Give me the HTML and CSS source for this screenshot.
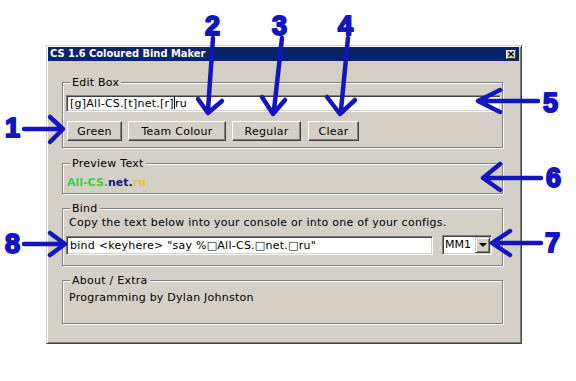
FILE: index.html
```html
<!DOCTYPE html>
<html lang="en">
<head>
  <meta charset="UTF-8">
  <title>CS 1.6 Coloured Bind Maker</title>
  <link rel="stylesheet" href="styles.css">
</head>
<body>
  <div class="window">
    <div class="titlebar">
      <span class="title">CS 1.6 Coloured Bind Maker</span>
      <span class="close">
        <svg width="6" height="6" viewBox="0 0 6 6"><path d="M0.5 0.5L5.5 5.5M5.5 0.5L0.5 5.5" stroke="#000" stroke-width="1.3"/></svg>
      </span>
    </div>
    <div class="client">
      <div class="group group-edit">
        <span class="group-title">Edit Box</span>
        <div class="textbox">[g]All-CS.[t]net.[r]<span class="caret"></span>ru</div>
        <div class="buttons">
          <button class="btn btn-green">Green</button>
          <button class="btn btn-team">Team Colour</button>
          <button class="btn btn-regular">Regular</button>
          <button class="btn btn-clear">Clear</button>
        </div>
      </div>

      <div class="group group-preview">
        <span class="group-title">Preview Text</span>
        <div class="preview"><span class="c-green">All-CS.</span><span class="c-team">net.</span><span class="c-regular">ru</span></div>
      </div>

      <div class="group group-bind">
        <span class="group-title">Bind</span>
        <div class="note">Copy the text below into your console or into one of your configs.</div>
        <div class="bind-row">
          <div class="textbox textbox-bind">bind &lt;keyhere&gt; "say %□All-CS.□net.□ru"</div>
          <div class="combo">
            <span class="combo-value">MM1</span>
            <span class="combo-btn"><span class="combo-arrow"></span></span>
          </div>
        </div>
      </div>

      <div class="group group-about">
        <span class="group-title">About / Extra</span>
        <div class="note">Programming by Dylan Johnston</div>
      </div>
    </div>
  </div>

  <!-- hand drawn callouts on top of the screenshot -->
  <svg class="marks" width="576" height="381" viewBox="0 0 576 381">
    <g class="arrow">
      <path d="M24 129L62 129M50 117L63 129L50 142"/>
      <path d="M213 38L208 110M198 99L208 113L222 101"/>
      <path d="M282 38L274 110M262 97L273 114L285 100"/>
      <path d="M348 38L341 110M327 97L340 114L355 100"/>
      <path d="M538 101L479 101M500 90L478 101L500 112"/>
      <path d="M541 178L484 178M500 164L483 178L500 190"/>
      <path d="M541 243L493 243M510 231L492 243L510 255"/>
      <path d="M24 244L64 244M50 233L65 244L50 255"/>
    </g>
    <g class="num">
      <text x="5" y="137">1</text>
      <text x="205" y="35">2</text>
      <text x="272" y="35">3</text>
      <text x="338" y="35">4</text>
      <text x="543" y="112">5</text>
      <text x="546" y="187">6</text>
      <text x="545" y="252">7</text>
      <text x="5" y="253">8</text>
    </g>
  </svg>
</body>
</html>
```
FILE: styles.css
```css
body {
  margin: 0;
  background: #fff;
  font: 11px "DejaVu Sans", sans-serif;
  letter-spacing: 0.25px;
  color: #000;
  position: relative;
  width: 576px;
  height: 381px;
  overflow: hidden;
}

/* window frame */
.window {
  margin: 45px 0 0 46px;
  width: 476px;
  height: 299px;
  box-sizing: border-box;
  background: #d4d0c8;
  border: 1px solid;
  border-color: #d4d0c8 #404040 #404040 #d4d0c8;
  box-shadow: inset 1px 1px 0 #fff, inset -1px -1px 0 #808080;
  padding: 1px 2px 0 1px;
}
.titlebar {
  height: 14px;
  background: #0a246a;
  display: flex;
  align-items: center;
  justify-content: space-between;
  padding: 0 3px 0 2px;
}
.title {
  color: #fff;
  font-family: "DejaVu Sans Condensed", "DejaVu Sans", sans-serif;
  font-weight: bold;
  letter-spacing: 0;
  line-height: 14px;
}
.close {
  width: 10px;
  height: 9px;
  box-sizing: border-box;
  background: #d4d0c8;
  border: 1px solid;
  border-color: #fff #404040 #404040 #fff;
  display: flex;
  align-items: center;
  justify-content: center;
}
.close svg { display: block; }

.client {
  padding: 0 0 0 14px;
}

/* group boxes */
.group {
  position: relative;
  width: 441px;
  box-sizing: border-box;
  border: 1px solid #808080;
  box-shadow: inset 1px 1px 0 #fff, 1px 1px 0 #fff;
  padding: 0 1px 0 3px;
}
.group-title {
  position: absolute;
  top: -7px;
  left: 7px;
  padding: 0 2px;
  line-height: 13px;
  background: #d4d0c8;
}
.group-edit { margin-top: 21px; padding-top: 12px; padding-bottom: 6px; }
.group-preview { margin-top: 15px; padding-top: 12px; padding-bottom: 4px; }
.group-bind { margin-top: 14px; padding-top: 7px; padding-bottom: 10px; }
.group-about { margin-top: 14px; padding-top: 10px; padding-bottom: 19px; }

/* sunken edit fields */
.textbox {
  height: 17px;
  box-sizing: border-box;
  background: #fff;
  border: 1px solid;
  border-color: #808080 #fff #fff #808080;
  box-shadow: inset 1px 1px 0 #404040, inset -1px -1px 0 #d4d0c8;
  padding: 0 3px;
  line-height: 15px;
  white-space: nowrap;
  overflow: hidden;
}
.caret {
  display: inline-block;
  width: 1px;
  height: 13px;
  background: #000;
  vertical-align: -2px;
}

.buttons {
  display: flex;
  margin: 9px 0 0 1px;
}
.btn {
  height: 20px;
  box-sizing: border-box;
  background: #d4d0c8;
  font: inherit;
  letter-spacing: inherit;
  color: #000;
  padding: 0;
  border: 1px solid;
  border-color: #fff #404040 #404040 #fff;
  box-shadow: inset -1px -1px 0 #808080;
  margin-right: 6px;
}
.btn-green { width: 55px; }
.btn-team { width: 98px; }
.btn-regular { width: 69px; margin-right: 7px; }
.btn-clear { width: 51px; }

.preview {
  font-weight: bold;
  letter-spacing: 0;
  line-height: 13px;
  padding-left: 1px;
}
.c-green { color: #3ad23a; }
.c-team { color: #161685; }
.c-regular { color: #ecc42c; }

.note {
  line-height: 13px;
  padding-left: 3px;
}

.bind-row {
  display: flex;
  align-items: center;
  margin-top: 6px;
}
.textbox-bind {
  width: 367px;
  height: 19px;
  line-height: 17px;
}
.combo {
  margin-left: 9px;
  width: 50px;
  height: 20px;
  box-sizing: border-box;
  background: #fff;
  border: 1px solid;
  border-color: #808080 #fff #fff #808080;
  box-shadow: inset 1px 1px 0 #404040, inset -1px -1px 0 #d4d0c8;
  display: flex;
  align-items: center;
  justify-content: space-between;
  padding: 1px 1px 1px 2px;
}
.combo-value { line-height: 14px; letter-spacing: 0; }
.combo-btn {
  width: 15px;
  height: 16px;
  box-sizing: border-box;
  background: #d4d0c8;
  border: 1px solid;
  border-color: #d4d0c8 #404040 #404040 #d4d0c8;
  box-shadow: inset 1px 1px 0 #fff, inset -1px -1px 0 #808080;
  display: flex;
  align-items: center;
  justify-content: center;
}
.combo-arrow {
  width: 0;
  height: 0;
  border-left: 4px solid transparent;
  border-right: 4px solid transparent;
  border-top: 4px solid #000;
}

/* callouts */
.marks {
  position: absolute;
  left: 0;
  top: 0;
  pointer-events: none;
}
.arrow path {
  fill: none;
  stroke: #1515c0;
  stroke-width: 4.5;
  stroke-linecap: round;
  stroke-linejoin: round;
}
.num text {
  font-family: "Liberation Sans", sans-serif;
  font-weight: bold;
  font-size: 27px;
  letter-spacing: 0;
  fill: #1515c0;
  stroke: #1515c0;
  stroke-width: 2;
  stroke-linejoin: round;
}
```
